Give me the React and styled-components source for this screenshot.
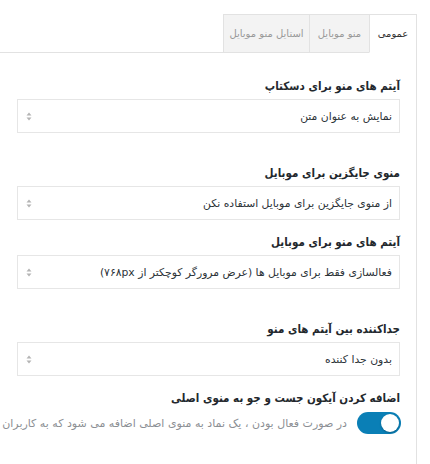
import React from "react";
import styled, { createGlobalStyle } from "styled-components";

const Global = createGlobalStyle`
  html, body { margin: 0; padding: 0; background: #fff; overflow: hidden; }
  body { font-family: "DejaVu Sans", "Noto Sans", sans-serif; }
`;

const Page = styled.div`
  width: 430px;
  height: 464px;
  direction: rtl;
  box-sizing: border-box;
  padding-top: 14px;
  padding-right: 13px;
  overflow: hidden;
`;

const Frame = styled.div`
  border-right: 1px solid #e2e2e2;
  height: 450px;
  box-sizing: border-box;
`;

const TabBar = styled.div`
  display: flex;
  height: 39px;
`;

const Tab = styled.div`
  box-sizing: border-box;
  width: ${(p) => p.$w}px;
  display: flex;
  align-items: center;
  justify-content: center;
  font-size: 10px;
  color: ${(p) => (p.$active ? "#333" : "#999")};
  background: ${(p) => (p.$active ? "#fff" : "#f3f3f3")};
  border-top: 1px solid #e2e2e2;
  border-left: 1px solid #e2e2e2;
  border-bottom: 1px solid ${(p) => (p.$active ? "transparent" : "#e2e2e2")};
  white-space: nowrap;
`;

const TabFill = styled.div`
  flex: 1;
  border-bottom: 1px solid #e2e2e2;
`;

const Content = styled.div`
  padding: 23px 16px 0 17px;
`;

const Field = styled.div`
  margin-bottom: ${(p) => (p.$spaced ? 30 : 12)}px;
`;

const Label = styled.div`
  font-family: "DejaVu Sans Condensed", "DejaVu Sans", sans-serif;
  font-size: 11.5px;
  font-weight: bold;
  color: #23282d;
  line-height: 20px;
  height: 20px;
  margin-bottom: 3px;
  white-space: nowrap;
`;

const Select = styled.div`
  box-sizing: border-box;
  height: 34px;
  border: 1px solid #e6e6e6;
  background: #fff;
  display: flex;
  align-items: center;
  justify-content: space-between;
  padding: 0 7px 0 8px;
  font-size: 10.8px;
  color: #2c3338;
  white-space: nowrap;
`;

const Arrows = styled.svg`
  width: 6px;
  height: 9px;
  flex: none;
`;

const ToggleRow = styled.div`
  display: flex;
  align-items: center;
  gap: 10px;
  margin-top: 4px;
  margin-right: -1px;
`;

const Switch = styled.div`
  flex: none;
  position: relative;
  width: 44px;
  height: 22px;
  border-radius: 11px;
  background: #0a7fb6;
`;

const Knob = styled.span`
  position: absolute;
  top: 2px;
  right: 2px;
  width: 18px;
  height: 18px;
  border-radius: 50%;
  background: #fff;
  box-shadow: 0 1px 2px rgba(0, 0, 0, 0.25);
`;

const Desc = styled.div`
  font-size: 11px;
  color: #8c8f94;
  white-space: nowrap;
`;

const SelectArrows = () => (
  <Arrows viewBox="0 0 6 9">
    <path d="M3 0.5 L5.5 3.5 H0.5 Z" fill="#b4b4b4" />
    <path d="M3 8.5 L5.5 5.5 H0.5 Z" fill="#b4b4b4" />
  </Arrows>
);

const fields = [
  { label: "آیتم های منو برای دسکتاپ", value: "نمایش به عنوان متن", spaced: true },
  { label: "منوی جایگزین برای موبایل", value: "از منوی جایگزین برای موبایل استفاده نکن" },
  { label: "آیتم های منو برای موبایل", value: "فعالسازی فقط برای موبایل ها (عرض مرورگر کوچکتر از ۷۶۸px)", spaced: true },
  { label: "جداکننده بین آیتم های منو", value: "بدون جدا کننده" },
];

export default function App() {
  return (
    <>
      <Global />
      <Page>
        <Frame>
          <TabBar>
            <Tab $active $w={47}>عمومی</Tab>
            <Tab $w={60}>منو موبایل</Tab>
            <Tab $w={86}>استایل منو موبایل</Tab>
            <TabFill />
          </TabBar>
          <Content>
            {fields.map((f) => (
              <Field key={f.label} $spaced={f.spaced}>
                <Label>{f.label}</Label>
                <Select>
                  <span>{f.value}</span>
                  <SelectArrows />
                </Select>
              </Field>
            ))}
            <Label>اضافه کردن آیکون جست و جو به منوی اصلی</Label>
            <ToggleRow>
              <Switch>
                <Knob />
              </Switch>
              <Desc>در صورت فعال بودن ، یک نماد به منوی اصلی اضافه می شود که به کاربران امکان جستجو در سایت را می دهد</Desc>
            </ToggleRow>
          </Content>
        </Frame>
      </Page>
    </>
  );
}
